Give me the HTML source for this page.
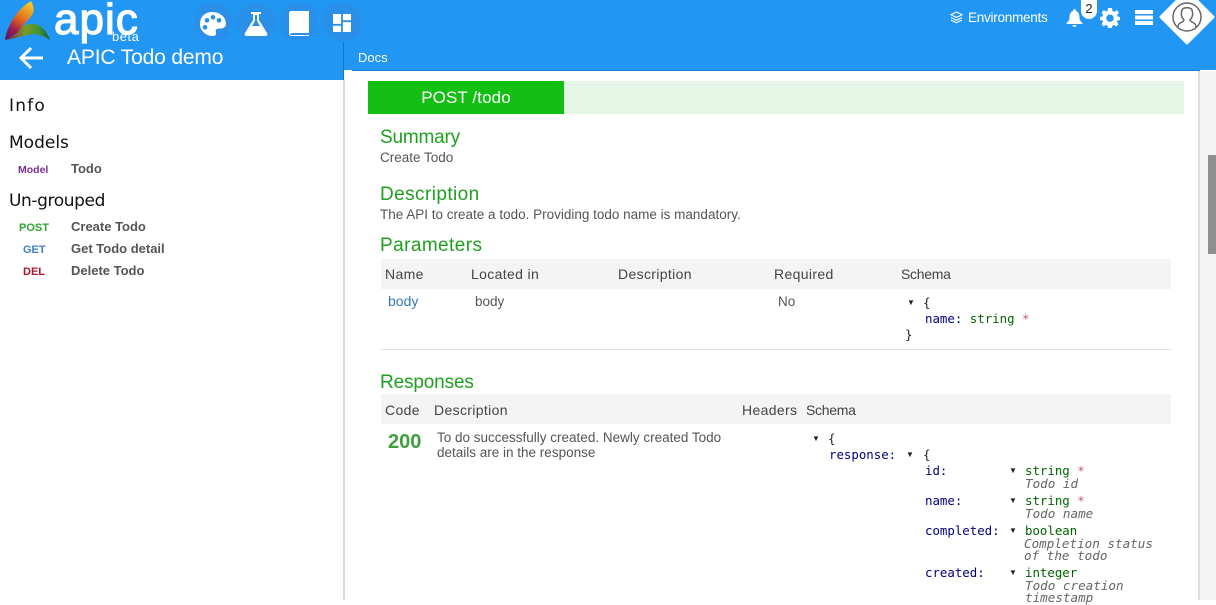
<!DOCTYPE html>
<html><head><meta charset="utf-8"><style>
*{box-sizing:border-box}
html,body{margin:0;padding:0;width:1216px;height:600px;overflow:hidden;background:#fff;font-family:"Liberation Sans",sans-serif}
.a{position:absolute;white-space:nowrap}
.h{color:#1fa01f;font-size:19px;letter-spacing:.42px}
.t{color:#555;font-size:13.5px}
.th{color:#444;font-size:14px;letter-spacing:.35px}
.hd{font-family:"DejaVu Sans",sans-serif;color:#111;font-size:17px}
.nav{font-size:13px;font-weight:bold;color:#555}
.m{font-weight:bold;font-size:11px}
.c{font-family:"DejaVu Sans Mono",monospace;font-size:12.4px;color:#222}
.k{color:#000080}.s{color:#006400}.r{color:#c45a6a}
.i{font-style:italic;color:#666;font-size:12.6px;font-family:"DejaVu Sans Mono",monospace}
.tri{font-size:8px;color:#222}
.cir{position:absolute;top:3px;width:38px;height:38px;border-radius:50%;background:#2a8fe8}
</style></head><body>
<div class="a" style="left:0;top:0;width:1216px;height:70px;background:#2196f3"></div>
<div class="a" style="left:0;top:0;width:343px;height:80px;background:#2196f3"></div>
<div class="a" style="left:343px;top:42px;width:1px;height:38px;background:#1878c8"></div>
<div class="a" style="left:343px;top:80px;width:2px;height:520px;background:#ddd"></div>
<div class="a" style="left:345px;top:70px;width:7px;height:530px;background:#fff"></div>
<div class="a" style="left:352px;top:70px;width:848px;height:1px;background:#1b80d8"></div>
<div class="a" style="left:1198px;top:71px;width:2px;height:529px;background:#ddd"></div>
<div class="a" style="left:1200px;top:71px;width:16px;height:529px;background:#f4f4f4"></div>
<div class="a" style="left:1208px;top:155px;width:8px;height:99px;background:#8f8f8f"></div>

<svg class="a" style="left:4px;top:0" width="48" height="42" viewBox="0 0 48 42">
<defs><linearGradient id="g1" x1=".7" y1="0" x2=".2" y2="1"><stop offset="0" stop-color="#f2c62a"/><stop offset=".45" stop-color="#e0641f"/><stop offset=".75" stop-color="#9c1c52"/><stop offset="1" stop-color="#5a1666"/></linearGradient>
<linearGradient id="g2" x1="0" y1="0" x2="1" y2="0"><stop offset="0" stop-color="#6f1a66"/><stop offset=".45" stop-color="#7c9a26"/><stop offset=".75" stop-color="#3f9632"/><stop offset="1" stop-color="#1a5a40"/></linearGradient></defs>
<path d="M1 40C10 30 20 23 30 24C38 25 43 32 46 40C38 35 31 33 23 35C15 37 8 39 1 40Z" fill="url(#g2)"/>
<path d="M27 1C31 8 31 13 24 20C19 25 16 28 14 32C10 35 5 38 1 40C3 26 13 9 27 1Z" fill="url(#g1)"/>
</svg>
<div class="a" style="left:54px;top:-5px;color:#fff;font-size:44px;letter-spacing:1px;line-height:50px;-webkit-text-stroke:1.2px #fff">apic</div>
<div class="a" style="left:112px;top:30px;color:#fff;font-size:13px;letter-spacing:.5px;line-height:14px">beta</div>

<div class="cir" style="left:194px"></div><div class="cir" style="left:237px"></div><div class="cir" style="left:280px"></div><div class="cir" style="left:323px"></div>
<svg class="a" style="left:199px;top:11px" width="28" height="26" viewBox="0 0 28 26"><path fill-rule="evenodd" fill="#fff" d="M13 1C6 1 1 6 1 13C1 20 7 25 14 25C16 25 17 24 17 22C17 20 16 19 18 18C20 17 26 19 27 13C27 6 21 1 13 1ZM6 14a2.3 2.3 0 1 0 .01 0ZM8 7a2.3 2.3 0 1 0 .01 0ZM14 4a2.3 2.3 0 1 0 .01 0ZM20 7a2.3 2.3 0 1 0 .01 0Z"/></svg>
<svg class="a" style="left:243px;top:11px" width="26" height="26" viewBox="0 0 26 26"><path fill-rule="evenodd" fill="#fff" d="M8 1H18V3H16V9L24 22C25 24 24 25 22 25H4C2 25 1 24 2 22L10 9V3H8ZM12 4V10L9 15H17L14 10V4Z"/></svg>
<svg class="a" style="left:288px;top:10px" width="23" height="28" viewBox="0 0 23 28"><path fill="#fff" d="M3 1H21V23H5C3 23 2 24 2 25H21V26H4C2 26 1 25 1 24V3C1 2 2 1 3 1Z"/></svg>
<svg class="a" style="left:333px;top:14px" width="18" height="18" viewBox="0 0 20 20"><path fill="#fff" d="M0 0H9V11H0ZM11 0H20V7H11ZM0 13H9V20H0ZM11 9H20V20H11Z"/></svg>

<svg class="a" style="left:19px;top:46px" width="25" height="24" viewBox="0 0 25 24"><path d="M24 12H3M12 2L2 12L12 22" stroke="#fff" stroke-width="3" fill="none"/></svg>
<div class="a" style="left:67px;top:44px;color:#fff;font-size:21px;letter-spacing:-.15px;line-height:28px">APIC Todo demo</div>
<div class="a" style="left:358px;top:50px;color:#fff;font-size:13px;line-height:16px">Docs</div>

<svg class="a" style="left:950px;top:11px" width="13" height="13" viewBox="0 0 13 13"><path d="M6.5 1L12 3.7L6.5 6.4L1 3.7ZM1 6.5L6.5 9.2L12 6.5M1 9L6.5 11.7L12 9" stroke="#fff" fill="none" stroke-width="1.1"/></svg>
<div class="a" style="left:968px;top:10px;color:#fff;font-size:13.5px;line-height:16px;letter-spacing:-.25px">Environments</div>
<svg class="a" style="left:1066px;top:9px" width="17" height="18" viewBox="0 0 17 18"><path fill="#fff" d="M8.5 0C9.5 0 10 1 10 2C13 3 13.5 6 13.5 9C13.5 11 15 13 16.5 14V15H.5V14C2 13 3.500 11 3.500 9C3.500 6 4 3 7 2C7 1 7.500 0 8.500 0ZM6.500 16H10.500C10.500 17 9.500 18 8.500 18C7.500 18 6.500 17 6.500 16Z"/></svg>
<div class="a" style="left:1081px;top:0;width:16px;height:19px;background:#fff;border-radius:0 0 8px 8px;color:#222;font-size:13px;text-align:center;line-height:17px">2</div>
<svg class="a" style="left:1100px;top:8px" width="20" height="20" viewBox="0 0 20 20"><path fill-rule="evenodd" fill="#fff" d="M8 0H12L12.500 3L14.500 3.800L17 2L19 5L17 7L17.500 8.500L20 9V12L17.500 12.500L17 14L18.500 16.500L16 18.500L14 17L12.500 17.500L12 20H8L7.500 17.500L6 17L3.500 18.500L1.500 16L3 14L2.500 12.500L0 12V9L2.500 8.500L3 6.500L1.500 4.500L4 2L6 3.500L7.500 3ZM10 6.500a3.700 3.700 0 1 0 .01 0Z"/></svg>
<svg class="a" style="left:1134px;top:10px" width="20" height="15" viewBox="0 0 20 15"><path fill="#fff" d="M1 0H19V4H1ZM1 5.500H19V9.500H1ZM1 11H19V15H1Z"/></svg>
<svg class="a" style="left:1158px;top:-11px" width="58" height="58" viewBox="0 0 58 58"><path d="M29 2L55 28L29 54L3 28Z" fill="#fff" stroke="#fff" stroke-width="3" stroke-linejoin="round"/><circle cx="29" cy="28" r="14" fill="none" stroke="#666" stroke-width="1.500"/><path d="M20 38C20 33 25 34 26 31C23 28 23 24 24 21C25 18 33 18 34 21C35 24 35 28 32 31C33 34 38 33 38 38" fill="none" stroke="#666" stroke-width="1.500"/></svg>

<div class="a hd" style="left:9px;top:95px;line-height:22px;letter-spacing:1.2px">Info</div>
<div class="a hd" style="left:9px;top:132px;line-height:22px">Models</div>
<div class="a m" style="left:18px;top:164px;color:#7b2d96;line-height:13px;font-size:10.500px">Model</div>
<div class="a nav" style="left:71px;top:161px;line-height:16px">Todo</div>
<div class="a hd" style="left:9px;top:190px;line-height:22px;letter-spacing:-.4px">Un-grouped</div>
<div class="a m" style="left:19px;top:222px;color:#2fa52f;line-height:13px">POST</div>
<div class="a nav" style="left:71px;top:219px;line-height:16px">Create Todo</div>
<div class="a m" style="left:23px;top:244px;color:#3b80c0;line-height:13px">GET</div>
<div class="a nav" style="left:71px;top:241px;line-height:16px">Get Todo detail</div>
<div class="a m" style="left:23px;top:266px;color:#a8192e;line-height:13px">DEL</div>
<div class="a nav" style="left:71px;top:262.5px;line-height:16px">Delete Todo</div>

<div class="a" style="left:368px;top:81px;width:816px;height:33px;background:#e6f6e6"></div>
<div class="a" style="left:368px;top:81px;width:196px;height:33px;background:#14bf14;color:#fff;font-size:17px;line-height:33px;text-align:center;letter-spacing:.1px">POST /todo</div>

<div class="a h" style="left:380px;top:127px;line-height:22px;letter-spacing:-.2px">Summary</div>
<div class="a t" style="left:380px;top:150px;line-height:16px">Create Todo</div>
<div class="a h" style="left:380px;top:184px;line-height:22px">Description</div>
<div class="a t" style="left:380px;top:207px;line-height:16px">The API to create a todo. Providing todo name is mandatory.</div>
<div class="a h" style="left:380px;top:235px;line-height:22px">Parameters</div>

<div class="a" style="left:381px;top:259px;width:790px;height:30px;background:#f4f4f4"></div>
<div class="a th" style="left:385px;top:266px;line-height:16px">Name</div>
<div class="a th" style="left:471px;top:266px;line-height:16px">Located in</div>
<div class="a th" style="left:618px;top:266px;line-height:16px">Description</div>
<div class="a th" style="left:774px;top:266px;line-height:16px">Required</div>
<div class="a th" style="left:901px;top:266px;line-height:16px;letter-spacing:-.3px">Schema</div>
<div class="a" style="left:388px;top:293px;color:#337ab7;font-size:14px;line-height:16px">body</div>
<div class="a t" style="left:475px;top:294px;line-height:16px">body</div>
<div class="a t" style="left:778px;top:294px;line-height:16px">No</div>
<div class="a tri" style="left:907px;top:298px;line-height:10px">▼</div>
<div class="a c" style="left:923px;top:295px;line-height:15px">{</div>
<div class="a c" style="left:925px;top:311px;line-height:15px"><span class="k">name:</span> <span class="s">string</span> <span class="r">*</span></div>
<div class="a c" style="left:905px;top:327px;line-height:15px">}</div>
<div class="a" style="left:381px;top:349px;width:790px;height:1px;background:#ddd"></div>

<div class="a h" style="left:380px;top:372px;line-height:22px;letter-spacing:-.15px">Responses</div>
<div class="a" style="left:381px;top:394px;width:790px;height:30px;background:#f4f4f4"></div>
<div class="a th" style="left:385px;top:402px;line-height:16px">Code</div>
<div class="a th" style="left:434px;top:402px;line-height:16px">Description</div>
<div class="a th" style="left:742px;top:402px;line-height:16px">Headers</div>
<div class="a th" style="left:806px;top:402px;line-height:16px;letter-spacing:-.3px">Schema</div>
<div class="a" style="left:388px;top:430px;color:#3f9f3f;font-size:20px;font-weight:bold;line-height:24px">200</div>
<div class="a t" style="left:437px;top:430px;line-height:15px">To do successfully created. Newly created Todo<br>details are in the response</div>

<div class="a tri" style="left:812px;top:434px;line-height:10px">▼</div>
<div class="a c" style="left:828px;top:431px;line-height:15px">{</div>
<div class="a c k" style="left:829px;top:447px;line-height:15px;color:#000080">response:</div>
<div class="a tri" style="left:906px;top:450px;line-height:10px">▼</div>
<div class="a c" style="left:923px;top:447px;line-height:15px">{</div>

<div class="a c k" style="left:925px;top:463px;line-height:15px;color:#000080">id:</div>
<div class="a tri" style="left:1009px;top:466px;line-height:10px">▼</div>
<div class="a c" style="left:1025px;top:463px;line-height:15px"><span class="s">string</span> <span class="r">*</span></div>
<div class="a i" style="left:1025px;top:477px;line-height:14px">Todo id</div>

<div class="a c k" style="left:925px;top:493px;line-height:15px;color:#000080">name:</div>
<div class="a tri" style="left:1009px;top:496px;line-height:10px">▼</div>
<div class="a c" style="left:1025px;top:493px;line-height:15px"><span class="s">string</span> <span class="r">*</span></div>
<div class="a i" style="left:1025px;top:507px;line-height:14px">Todo name</div>

<div class="a c k" style="left:925px;top:523px;line-height:15px;color:#000080">completed:</div>
<div class="a tri" style="left:1009px;top:526px;line-height:10px">▼</div>
<div class="a c s" style="left:1025px;top:523px;line-height:15px;color:#006400">boolean</div>
<div class="a i" style="left:1024px;top:538px;line-height:12px">Completion status<br>of the todo</div>

<div class="a c k" style="left:925px;top:565px;line-height:15px;color:#000080">created:</div>
<div class="a tri" style="left:1009px;top:568px;line-height:10px">▼</div>
<div class="a c s" style="left:1025px;top:565px;line-height:15px;color:#006400">integer</div>
<div class="a i" style="left:1025px;top:580px;line-height:12px">Todo creation<br>timestamp</div>
</body></html>
